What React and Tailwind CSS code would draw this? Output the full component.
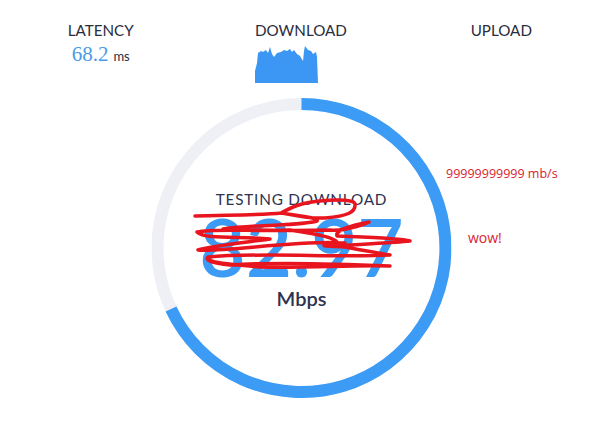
const graphTop = [
  [256, 82], [256, 70], [258, 62], [259, 52], [262, 50], [264, 51], [267, 49], [269, 52], [271, 46],
  [273, 53], [275, 56], [278, 52], [282, 51], [285, 49], [288, 50], [291, 48], [293, 51], [295, 49],
  [298, 53], [301, 55], [304, 60], [305, 50], [306, 45], [309, 49], [312, 50], [314, 53], [317, 51],
  [318, 56], [319, 82],
];

const scribble =
  'M195 216 C225 215 265 215 281 213 C292 207 300 203 320 201 C340 199 355 200 355 204 C356 212 348 216 325 218 C305 219 290 214 281 213 C300 216 320 218 317 221 C300 226 260 224 223 229 C250 230 285 231 330 230 C345 232 370 222 369 222 C350 226 335 230 337 236 C360 237 400 238 410 241 C390 243 360 244 336 246 C345 238 310 233 290 230 C260 232 215 228 197 232 C205 240 240 236 270 239 C240 243 210 246 198 250 C225 252 300 240 345 243 C325 246 310 245 345 247 C360 250 385 254 390 255 C340 258 260 252 208 257 C205 262 225 264 260 267 C310 268 350 265 390 266 C345 264 275 262 230 265 C210 263 205 260 208 257';

function Stat({ label, children }) {
  return (
    <div className="flex flex-col items-center">
      <div className="text-[15.2px] leading-5 text-[#2a2d3e]">{label}</div>
      {children}
    </div>
  );
}

function Graph() {
  const points = graphTop.map(([x, y]) => `${x - 256},${y - 45}`).join(' ');
  return (
    <svg width="64" height="37" viewBox="0 0 64 37" className="mt-[6px] mr-[27px]">
      <polygon points={points} fill="#3b97f3" />
    </svg>
  );
}

function Ring() {
  return (
    <svg width="300" height="300" viewBox="0 0 300 300" className="absolute inset-0">
      <circle cx="150" cy="150" r="144" fill="none" stroke="#eef0f6" strokeWidth="12" />
      <path d="M150 6 A144 144 0 1 1 19.5 211" fill="none" stroke="#3b9bf5" strokeWidth="12" />
    </svg>
  );
}

export default function App() {
  return (
    <div className="relative w-[600px] h-[430px] overflow-hidden bg-white font-['Lato','Noto_Sans',sans-serif]">
      {/* Header stats */}
      <div className="grid grid-cols-3 gap-x-[3px] pt-[20px] pl-[2px] h-[98px]">
        <Stat label="LATENCY">
          <div className="flex items-baseline gap-[5px] mt-[2px]">
            <span className="font-['Liberation_Serif',serif] text-[21px] leading-6 text-[#4a9be8]">68.2</span>
            <span className="text-[13px] text-[#2a2d3e]">ms</span>
          </div>
        </Stat>
        <Stat label="DOWNLOAD">
          <Graph />
        </Stat>
        <Stat label="UPLOAD" />
      </div>

      {/* Gauge */}
      <div className="relative mx-auto w-[300px] h-[300px] translate-x-[1.5px]">
        <Ring />
        <div className="relative flex flex-col items-center pt-[91px]">
          <div className="text-[15.3px] leading-5 tracking-[0.8px] text-[#2e3350]">TESTING DOWNLOAD</div>
          <div className="text-[80px] leading-[60px] font-semibold text-[#3b9bf5] mt-[7px]">82.97</div>
          <div className="text-[20px] leading-6 font-semibold text-[#2e3350] mt-[10px]">Mbps</div>
        </div>
      </div>

      {/* Red marker scribbled over the reading */}
      <svg width="600" height="430" viewBox="0 0 600 430" className="absolute inset-0">
        <path d={scribble} fill="none" stroke="#e8151f" strokeWidth="3.5" strokeLinecap="round" strokeLinejoin="round" />
      </svg>

      {/* Handwritten notes */}
      <div className="absolute left-[446px] top-[166px] font-['Open_Sans',sans-serif] text-[12.5px] leading-4 text-[#d8232f]">99999999999 mb/s</div>
      <div className="absolute left-[468px] top-[230px] font-['Open_Sans',sans-serif] text-[14px] leading-4 text-[#d8232f]">wow!</div>
    </div>
  );
}
